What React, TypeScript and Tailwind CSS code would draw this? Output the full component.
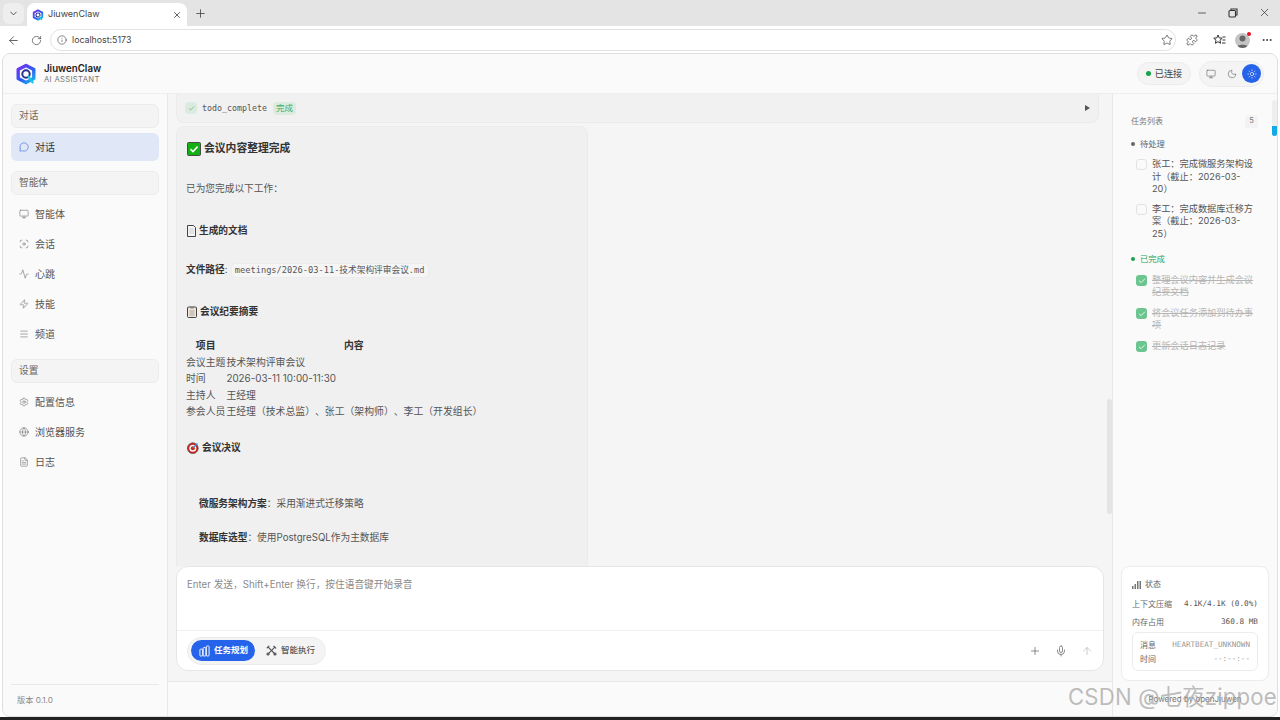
import React from "react";
import {
  Activity,
  ArrowLeft,
  ArrowUp,
  Check,
  ChevronDown,
  FileText,
  Focus,
  Globe,
  Info,
  Menu,
  MessageCircle,
  Mic,
  Minus,
  Monitor,
  Moon,
  MoreHorizontal,
  Plus,
  Puzzle,
  RotateCw,
  Settings,
  Star,
  Sun,
  X,
  Zap,
} from "lucide-react";

const sans = "font-['Inter','Noto_Sans_CJK_SC',sans-serif]";
const mono = "font-['DejaVu_Sans_Mono','Noto_Sans_CJK_SC',monospace]";

function Logo({ id, size }: { id: string; size: number }) {
  return (
    <svg width={size} height={size} viewBox="0 0 22 22" fill="none">
      <defs>
        <linearGradient id={id} x1="3" y1="2" x2="19" y2="20" gradientUnits="userSpaceOnUse">
          <stop offset="0" stopColor="#7c2df0" />
          <stop offset="0.55" stopColor="#2a5cf5" />
          <stop offset="1" stopColor="#18c6e8" />
        </linearGradient>
      </defs>
      <path
        d="M11 2.4 18.8 6.6V15.4L11 19.6 3.2 15.4V6.6Z"
        stroke={`url(#${id})`}
        strokeWidth="3.4"
        strokeLinejoin="round"
      />
      <circle cx="11" cy="11" r="3.7" stroke="#2a2f8f" strokeWidth="2" />
      <path d="M13.6 13.6 17.6 19.4" stroke="#18c6e8" strokeWidth="2.2" strokeLinecap="round" />
    </svg>
  );
}

function CheckEmoji() {
  return (
    <svg width="14" height="14" viewBox="0 0 14 14" className="-mt-[1px]">
      <rect x="0.5" y="0.5" width="13" height="13" rx="1" fill="#12b012" stroke="#4a4a4a" />
      <path d="M3.5 7.2 6 9.6 10.6 4.6" stroke="#fff" strokeWidth="1.6" fill="none" />
    </svg>
  );
}

function PageEmoji() {
  return (
    <svg width="9" height="12" viewBox="0 0 9 12">
      <path d="M.5.5H6.5L8.5 2.5V11.5H.5Z" fill="#f4f4f4" stroke="#444" />
      <path d="M2 4H7M2 6H7M2 8H7" stroke="#bbb" strokeWidth=".6" />
    </svg>
  );
}

function ClipEmoji() {
  return (
    <svg width="10" height="12" viewBox="0 0 10 12">
      <rect x=".5" y="1" width="9" height="10.5" rx="1" fill="#f0e6d8" stroke="#444" />
      <rect x="3" y=".5" width="4" height="2" fill="#888" />
      <path d="M2.5 5H7.5M2.5 7H7.5M2.5 9H7.5" stroke="#888" strokeWidth=".7" />
    </svg>
  );
}

function TargetEmoji() {
  return (
    <svg width="12" height="12" viewBox="0 0 12 12">
      <circle cx="5.8" cy="6.2" r="5.4" fill="#c8281e" stroke="#3a3a3a" strokeWidth=".6" />
      <circle cx="5.8" cy="6.2" r="3.5" fill="#f4f4f4" />
      <circle cx="5.8" cy="6.2" r="2" fill="#c8281e" />
      <path d="M6 6 10.5 1.5" stroke="#2b8fd8" strokeWidth="1.2" />
    </svg>
  );
}

function ToolsIcon() {
  return (
    <svg width="11" height="11" viewBox="0 0 12 12" fill="none" stroke="#555" strokeWidth="1.3" strokeLinecap="round">
      <path d="M2.4 2.4 9.8 9.8" />
      <path d="M9.6 2.4 2.4 9.6" />
      <circle cx="2.2" cy="9.8" r="1.1" />
      <circle cx="9.8" cy="9.8" r="1.1" />
      <path d="M8.6 1.4 10.6 3.4" />
      <path d="M1.2 3.2 3.2 1.2" />
    </svg>
  );
}

function PlanIcon() {
  return (
    <svg width="11" height="12" viewBox="0 0 12 13" fill="none" stroke="#fff" strokeWidth="1">
      <rect x="1" y="4.5" width="3" height="7.5" rx=".8" />
      <rect x="4.5" y="2.8" width="3" height="9.2" rx=".8" />
      <rect x="8" y="1" width="3" height="11" rx=".8" />
    </svg>
  );
}

function FavoritesIcon() {
  return (
    <svg width="13" height="12" viewBox="0 0 13 12" fill="none" stroke="#333" strokeWidth="1">
      <path d="M5 1 6.2 3.9 9.2 4.2 7 6.2 7.6 9.3 5 7.7 2.4 9.3 3 6.2.8 4.2 3.8 3.9Z" strokeLinejoin="round" />
      <path d="M9.5 3H12.5M9.5 6H12.5M9 9H12.5" />
    </svg>
  );
}

function NavHead({ label }: { label: string }) {
  return (
    <div className="flex h-[24px] items-center rounded-md border border-[#ececec] bg-[#f4f4f4] pl-[7px] text-[9.7px] text-[#666]">
      {label}
    </div>
  );
}

function NavItem({ icon: Icon, label }: { icon: React.ElementType; label: string }) {
  return (
    <div className="flex h-[30px] items-center gap-[6px] pl-[8px] text-[10px] text-[#555]">
      <Icon size={10} strokeWidth={1.5} className="text-[#777]" />
      {label}
    </div>
  );
}

function Sidebar() {
  return (
    <aside className="flex w-[165px] shrink-0 flex-col border-r border-[#e8e8e8] bg-[#fafafa] px-[8px] pt-[10px]">
      <NavHead label="对话" />
      <div className="mt-[5px] flex h-[28px] items-center gap-[6px] rounded-md bg-[#e0e7f7] pl-[8px] text-[10px] text-[#333]">
        <MessageCircle size={10} strokeWidth={1.5} className="text-[#3b6fe0]" />
        对话
      </div>
      <div className="mt-[10px]">
        <NavHead label="智能体" />
      </div>
      <div className="mt-[4px]">
        <NavItem icon={Monitor} label="智能体" />
        <NavItem icon={Focus} label="会话" />
        <NavItem icon={Activity} label="心跳" />
        <NavItem icon={Zap} label="技能" />
        <NavItem icon={Menu} label="频道" />
      </div>
      <div className="mt-[10px]">
        <NavHead label="设置" />
      </div>
      <div className="mt-[4px]">
        <NavItem icon={Settings} label="配置信息" />
        <NavItem icon={Globe} label="浏览器服务" />
        <NavItem icon={FileText} label="日志" />
      </div>
      <div className="mt-auto flex h-[32px] items-center border-t border-[#e8e8e8] pl-[6px] text-[8.2px] text-[#888]">
        版本 0.1.0
      </div>
    </aside>
  );
}

function Header() {
  return (
    <header className="flex h-[40px] shrink-0 items-center justify-between border-b border-[#eeeeee] bg-[#fafafa] pl-[12px] pr-[13px]">
      <div className="flex items-center gap-[7px]">
        <Logo id="logo-main" size={22} />
        <div className="flex flex-col">
          <span className="text-[9.7px] font-semibold leading-[12px] text-[#222]">JiuwenClaw</span>
          <span className="text-[7.7px] leading-[10px] tracking-[0.3px] text-[#777]">AI ASSISTANT</span>
        </div>
      </div>
      <div className="flex items-center gap-[8px]">
        <div className="flex h-[23px] w-[54px] items-center justify-center gap-[4px] rounded-full border border-[#ececec] bg-[#f4f4f4] text-[9.2px] text-[#444]">
          <span className="size-[5px] rounded-full bg-[#16a34a]" />
          已连接
        </div>
        <div className="flex h-[26px] w-[65px] items-center justify-end gap-[5px] rounded-full border border-[#ececec] bg-[#f4f4f4] pr-[2px]">
          <Monitor size={10} strokeWidth={1.5} className="mr-[6px] text-[#666]" />
          <Moon size={10} strokeWidth={1.5} className="text-[#666]" />
          <span className="flex size-[19px] items-center justify-center rounded-full bg-[#2563eb]">
            <Sun size={10} strokeWidth={1.5} className="text-white" />
          </span>
        </div>
      </div>
    </header>
  );
}

const rows = [
  ["会议主题", "技术架构评审会议"],
  ["时间", "2026-03-11 10:00-11:30"],
  ["主持人", "王经理"],
  ["参会人员", "王经理（技术总监）、张工（架构师）、李工（开发组长）"],
];

function Message() {
  return (
    <div className="mt-[3px] w-[412px] shrink-0 rounded-t-lg border border-[#ebebeb] bg-[#f0f0f0] pb-[40px] pl-[9px] pt-[14px] text-[9.7px] text-[#555]">
      <h2 className="ml-[1px] flex h-[16px] items-center gap-[3px] text-[10.8px] font-semibold text-[#333]">
        <CheckEmoji />
        会议内容整理完成
      </h2>
      <p className="mt-[24px] leading-[16px]">已为您完成以下工作：</p>
      <h3 className="ml-[1px] mt-[26px] flex h-[16px] items-center gap-[3px] text-[9.7px] font-semibold text-[#333]">
        <PageEmoji />
        生成的文档
      </h3>
      <p className="mt-[23px] flex h-[16px] items-center">
        <strong className="font-semibold text-[#333]">文件路径</strong>
        <span className="w-[6px]">:</span>
        <code className={`${mono} rounded-sm border border-[#ececec] bg-[#f5f5f5] px-[3px] text-[8.7px] leading-[13px]`}>
          meetings/2026-03-11-技术架构评审会议.md
        </code>
      </p>
      <h3 className="ml-[1px] mt-[26px] flex h-[16px] items-center gap-[3px] text-[9.7px] font-semibold text-[#333]">
        <ClipEmoji />
        会议纪要摘要
      </h3>
      <table className="mt-[17px] w-[294px] border-collapse text-[9.85px]">
        <thead>
          <tr className="h-[17px]">
            <th className="w-[41px] text-center font-semibold text-[#333]">项目</th>
            <th className="text-center font-semibold text-[#333]">内容</th>
          </tr>
        </thead>
        <tbody>
          {rows.map(([k, v]) => (
            <tr key={k} className="h-[16.5px]">
              <td className="whitespace-nowrap">{k}</td>
              <td className="whitespace-nowrap pl-[1px]">{v}</td>
            </tr>
          ))}
        </tbody>
      </table>
      <h3 className="ml-[1px] mt-[20px] flex h-[16px] items-center gap-[3px] text-[9.7px] font-semibold text-[#333]">
        <TargetEmoji />
        会议决议
      </h3>
      <p className="mt-[40px] pl-[13px] leading-[16px]">
        <strong className="font-semibold text-[#333]">微服务架构方案</strong>：采用渐进式迁移策略
      </p>
      <p className="mt-[18px] pl-[13px] leading-[16px]">
        <strong className="font-semibold text-[#333]">数据库选型</strong>：使用PostgreSQL作为主数据库
      </p>
    </div>
  );
}

function Composer() {
  return (
    <div className="ml-[8px] flex h-[105px] w-[928px] shrink-0 flex-col rounded-xl border border-[#e6e6e6] bg-white">
      <div className="h-[64px] border-b border-[#f0f0f0] pl-[10px] pt-[10px] text-[9.7px] leading-[16px] text-[#8a8a8a]">
        Enter 发送，Shift+Enter 换行，按住语音键开始录音
      </div>
      <div className="flex flex-1 items-center justify-between pl-[10px] pr-[10px]">
        <div className="flex h-[28px] w-[139px] items-center rounded-full border border-[#ececec] bg-[#f4f4f4] pl-[3px]">
          <div className="flex h-[21px] w-[64px] items-center gap-[4px] rounded-full bg-[#2563eb] pl-[8px] text-[8.5px] font-semibold text-white">
            <PlanIcon />
            任务规划
          </div>
          <div className="ml-[11px] flex items-center gap-[4px] text-[8.5px] font-medium text-[#555]">
            <ToolsIcon />
            智能执行
          </div>
        </div>
        <div className="flex items-center gap-[14px]">
          <Plus size={12} strokeWidth={1.5} className="text-[#666]" />
          <Mic size={12} strokeWidth={1.5} className="text-[#666]" />
          <ArrowUp size={12} strokeWidth={1.5} className="text-[#bbb]" />
        </div>
      </div>
    </div>
  );
}

function Main() {
  return (
    <main className="relative flex min-w-0 flex-1 flex-col bg-[#f5f5f5]">
      <div className="flex h-[472px] shrink-0 flex-col overflow-hidden pl-[8px]">
        <div className="flex h-[29px] w-[923px] shrink-0 items-center justify-between rounded-b-lg border border-t-0 border-[#ebebeb] bg-[#f1f1f1] pl-[8px] pr-[8px]">
          <div className="flex items-center gap-[5px]">
            <span className="flex size-[12px] items-center justify-center rounded-sm bg-[#dcebe0]">
              <Check size={7} strokeWidth={2} className="text-[#34a853]" />
            </span>
            <span className={`${mono} text-[8.3px] text-[#555]`}>todo_complete</span>
            <span className="ml-[1px] rounded-[4px] bg-[#dcebe0] px-[3px] text-[8.5px] leading-[13px] text-[#3fae66]">完成</span>
          </div>
          <span className="border-y-[3px] border-l-[5px] border-y-transparent border-l-[#555]" />
        </div>
        <Message />
      </div>
      <Composer />
      <div className="mt-[10px] flex-1 border-t border-[#e8e8e8] bg-[#fafafa]" />
      <div className="absolute right-0 top-[305px] h-[115px] w-[5px] rounded-full bg-[#e4e4e6]" />
    </main>
  );
}

const pending = [
  "张工：完成微服务架构设计（截止：2026-03-20）",
  "李工：完成数据库迁移方案（截止：2026-03-25）",
];
const done = ["整理会议内容并生成会议纪要文档", "将会议任务添加到待办事项", "更新会话日志记录"];

function RightPanel() {
  return (
    <aside className="relative flex w-[165px] shrink-0 flex-col border-l border-[#e8e8e8] bg-[#fafafa]">
      <div className="pl-[18px] pr-[19px] pt-[20px]">
        <div className="flex h-[14px] items-center justify-between text-[8px] text-[#777]">
          <span>任务列表</span>
          <span className="flex size-[13px] items-center justify-center rounded-[3px] bg-[#f3f3f3] text-[7.5px]">5</span>
        </div>
        <div className="mt-[9px] flex h-[14px] items-center gap-[5px] text-[8.3px] text-[#666]">
          <span className="size-[4px] rounded-full bg-[#666]" />
          待处理
        </div>
        <div className="mt-[7px]">
          {pending.map((t) => (
            <div key={t} className="mb-[7px] flex gap-[5px] pl-[5px]">
              <span className="mt-[1px] size-[11px] shrink-0 rounded-[3px] border border-[#e2e2e2] bg-[#fafafa]" />
              <span className="max-w-[102px] text-[9.2px] leading-[12.5px] text-[#555]">{t}</span>
            </div>
          ))}
        </div>
        <div className="mt-[12px] flex h-[14px] items-center gap-[5px] text-[8.3px] text-[#22a35a]">
          <span className="size-[4px] rounded-full bg-[#16a34a]" />
          已完成
        </div>
        <div className="mt-[8px]">
          {done.map((t) => (
            <div key={t} className="mb-[9px] flex gap-[5px] pl-[5px]">
              <span className="mt-[1px] flex size-[11px] shrink-0 items-center justify-center rounded-[3px] bg-[#6cc58f]">
                <Check size={8} strokeWidth={2.5} className="text-white" />
              </span>
              <span className="max-w-[102px] text-[9.2px] leading-[12px] text-[#b5b5b5] line-through">{t}</span>
            </div>
          ))}
        </div>
      </div>
      <div className="mx-[8px] mt-auto rounded-lg border border-[#ececec] bg-white px-[10px] pt-[10px]">
        <div className="flex h-[14px] items-center gap-[4px] text-[8px] text-[#666]">
          <svg width="9" height="9" viewBox="0 0 9 9" fill="#777">
            <rect x="0" y="6" width="1.5" height="3" />
            <rect x="2.5" y="4" width="1.5" height="5" />
            <rect x="5" y="1" width="1.5" height="8" />
            <rect x="7.5" y="1" width="1.5" height="8" />
          </svg>
          状态
        </div>
        <div className="mt-[6px] flex h-[14px] items-center justify-between text-[8px] text-[#666]">
          <span>上下文压缩</span>
          <span className={`${mono} text-[7.7px] text-[#555]`}>4.1K/4.1K (0.0%)</span>
        </div>
        <div className="mt-[4px] flex h-[14px] items-center justify-between text-[8px] text-[#666]">
          <span>内存占用</span>
          <span className={`${mono} text-[7.7px] text-[#555]`}>360.8 MB</span>
        </div>
        <div className="mb-[9px] mt-[3px] rounded-md border border-[#ececec] px-[7px] pb-[4px] pt-[5px]">
          <div className="flex h-[14px] items-center justify-between text-[8px] text-[#666]">
            <span>消息</span>
            <span className={`${mono} text-[7.6px] text-[#999]`}>HEARTBEAT_UNKNOWN</span>
          </div>
          <div className="flex h-[14px] items-center justify-between text-[8px] text-[#666]">
            <span>时间</span>
            <span className={`${mono} text-[7.6px] text-[#999]`}>--:--:--</span>
          </div>
        </div>
      </div>
      <div className="flex h-[35px] shrink-0 items-center justify-center text-[8px] text-[#777]">
        Powered by openJiuwen
      </div>
      <div className="absolute right-0 top-[6px] h-[36px] w-[5px] overflow-hidden rounded-full bg-[#eeeeee]">
        <div className="mt-[26px] h-[10px] bg-[#12a9e6]" />
      </div>
    </aside>
  );
}

function BrowserChrome() {
  return (
    <>
      <div className="flex h-[26px] shrink-0 items-end bg-[#e4e4e4] pl-[3px]">
        <div className="mb-[2px] flex size-[21px] items-center justify-center rounded-md bg-[#eeeeee]">
          <ChevronDown size={11} className="text-[#444]" />
        </div>
        <div className="ml-[3px] flex h-[23px] w-[160px] items-center gap-[4px] rounded-t-lg bg-white pl-[5px] pr-[5px]">
          <Logo id="logo-tab" size={12} />
          <span className="pb-[1px] text-[9px] text-[#444]">JiuwenClaw</span>
          <X size={10} className="ml-auto text-[#444]" />
        </div>
        <Plus size={13} strokeWidth={1.5} className="mb-[6px] ml-[7px] text-[#444]" />
        <div className="mb-[7px] ml-auto flex items-center gap-[20px] pr-[9px]">
          <Minus size={12} strokeWidth={1.5} className="text-[#333]" />
          <svg width="10" height="10" viewBox="0 0 10 10" fill="none" stroke="#333" strokeWidth="1.1">
            <rect x="1" y="2.5" width="6.5" height="6.5" rx="1" />
            <path d="M3 2.5V1H9V7H7.5" />
          </svg>
          <X size={13} strokeWidth={1.3} className="text-[#333]" />
        </div>
      </div>
      <div className="flex h-[27px] shrink-0 items-center bg-white pl-[7px] pt-[1px]">
        <ArrowLeft size={13} strokeWidth={1.5} className="text-[#444]" />
        <RotateCw size={11} strokeWidth={1.5} className="ml-[11px] text-[#444]" />
        <div className="ml-[8px] flex h-[22px] w-[1126px] items-center rounded-full border border-[#e3e3e3] pl-[6px] pr-[2px] text-[8.8px] text-[#444]">
          <Info size={10} strokeWidth={1.5} />
          <span className="ml-[5px]">localhost:5173</span>
          <Star size={12} strokeWidth={1.3} className="ml-auto text-[#333]" />
        </div>
        <Puzzle size={12} strokeWidth={1.3} className="ml-[10px] text-[#333]" />
        <span className="ml-[15px]">
          <FavoritesIcon />
        </span>
        <div className="relative ml-[9px] size-[15px]">
          <div className="size-[15px] overflow-hidden rounded-full bg-[#c4c4c4]">
            <svg width="15" height="15" viewBox="0 0 15 15" fill="#666">
              <circle cx="7.5" cy="5.5" r="3" />
              <path d="M1.5 15C1.5 10.5 13.5 10.5 13.5 15Z" />
            </svg>
          </div>
          <span className="absolute -right-[1px] -top-[1px] size-[4px] rounded-full bg-[#e81123]" />
        </div>
        <MoreHorizontal size={12} className="ml-[11px] text-[#333]" />
      </div>
    </>
  );
}

export default function App() {
  return (
    <div className={`${sans} relative flex h-[720px] w-[1280px] flex-col overflow-hidden bg-white [text-spacing-trim:space-all]`}>
      <BrowserChrome />
      <div className="mx-[2px] flex min-h-0 flex-1 flex-col overflow-hidden rounded-lg border border-[#dedede] bg-[#fafafa]">
        <Header />
        <div className="flex min-h-0 flex-1">
          <Sidebar />
          <Main />
          <RightPanel />
        </div>
      </div>
      <div className="h-[3px] shrink-0 bg-[#222]" />
      <div className="pointer-events-none absolute bottom-[7px] right-[3px] text-[22.2px] tracking-[0.2px] text-[#a0a0a0]/70">
        CSDN @七夜zippoe
      </div>
    </div>
  );
}
